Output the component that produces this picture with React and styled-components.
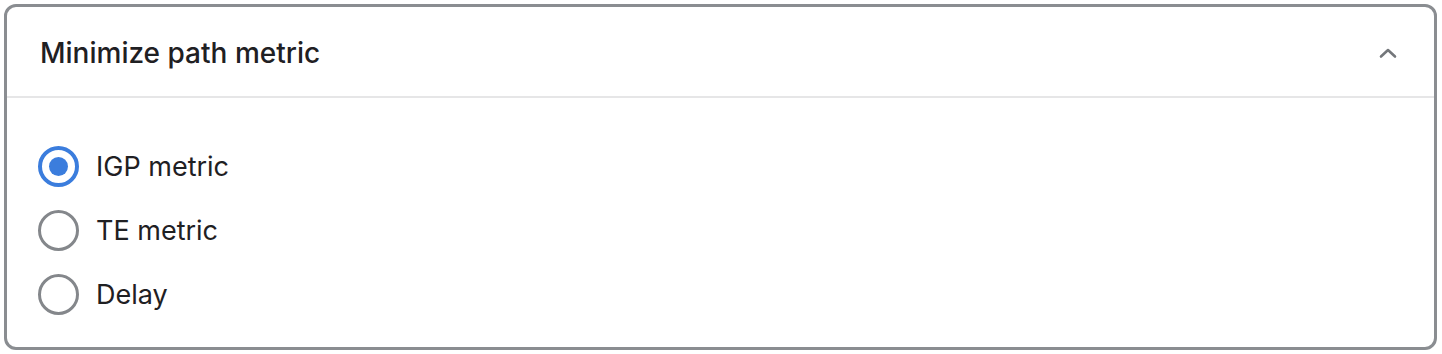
import React, { useState } from 'react';
import styled, { createGlobalStyle } from 'styled-components';

const GlobalStyle = createGlobalStyle`
  body {
    margin: 0;
    background: #ffffff;
    font-family: Inter, "Noto Sans", sans-serif;
    color: #1f2023;
  }
`;

const Page = styled.div`
  padding: 4px 5px 4px 4px;
`;

const Card = styled.section`
  box-sizing: border-box;
  height: 346px;
  border: 3px solid #8a8d91;
  border-radius: 12px;
  background: #fff;
  overflow: hidden;
`;

const Header = styled.button`
  box-sizing: border-box;
  width: 100%;
  height: 91px;
  display: flex;
  align-items: center;
  justify-content: space-between;
  padding: 3px 36px 0 33px;
  border: none;
  border-bottom: 2px solid #e6e6e7;
  background: none;
  font: inherit;
  cursor: pointer;
`;

const Title = styled.h2`
  margin: 0;
  font-size: 28px;
  font-weight: 500;
  color: #1f2023;
`;

const Body = styled.div`
  padding: 36px 31px 0;
  display: flex;
  flex-direction: column;
`;

const Option = styled.label`
  display: flex;
  align-items: center;
  height: 64px;
  gap: 17px;
  font-size: 27px;
  color: #1f2023;
  cursor: pointer;
`;

const Radio = styled.span`
  box-sizing: border-box;
  width: 41px;
  height: 41px;
  border-radius: 50%;
  border: ${p => (p.$checked ? '4px solid #3b7ddd' : '3px solid #84878b')};
  display: flex;
  align-items: center;
  justify-content: center;

  &::after {
    content: '';
    width: 19px;
    height: 19px;
    border-radius: 50%;
    background: #3b7ddd;
    display: ${p => (p.$checked ? 'block' : 'none')};
  }
`;

const options = ['IGP metric', 'TE metric', 'Delay'];

export default function App() {
  const [value, setValue] = useState('IGP metric');
  return (
    <>
      <GlobalStyle />
      <Page>
        <Card>
          <Header>
            <Title>Minimize path metric</Title>
            <svg width="20" height="12" viewBox="0 0 20 12" fill="none">
              <path d="M3 9.5 L10 3 L17 9.5" stroke="#74777b" strokeWidth="2.6" strokeLinecap="round" strokeLinejoin="round" />
            </svg>
          </Header>
          <Body>
            {options.map(o => (
              <Option key={o} onClick={() => setValue(o)}>
                <Radio $checked={value === o} />
                {o}
              </Option>
            ))}
          </Body>
        </Card>
      </Page>
    </>
  );
}
